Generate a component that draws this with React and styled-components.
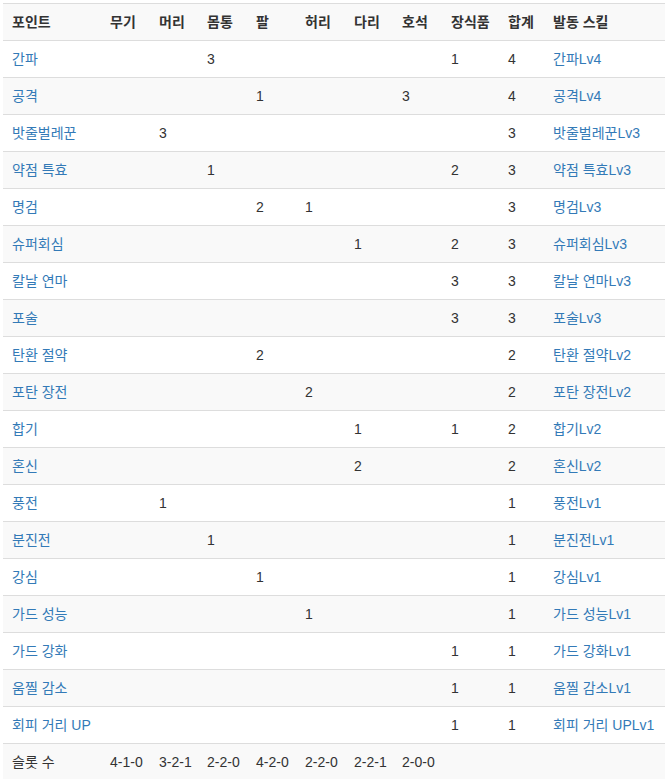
import styled, { createGlobalStyle } from 'styled-components';

const GlobalStyle = createGlobalStyle`
  body {
    margin: 0;
    font-family: "Liberation Sans", Arial, "Noto Sans CJK KR", sans-serif;
    font-size: 14px;
    line-height: 20px;
    color: #333;
    background: #fff;
  }
`

const Wrapper = styled.div`
  padding: 3px 0 0 3px;
  overflow: hidden;
`

const Table = styled.table`
  width: 662px;
  table-layout: fixed;
  border-collapse: collapse;
  border-spacing: 0;

  tr:nth-child(odd) {
    background-color: #f9f9f9;
  }
`

const Cell = styled.td`
  padding: 8px 8px 8px 9px;
  border-top: 1px solid #ddd;
  text-align: left;
  vertical-align: top;
  white-space: nowrap;
  font-weight: ${p => (p.$head ? 700 : 400)};
`

const SkillLink = styled.a`
  color: #337ab7;
  text-decoration: none;
`

const widths = [98, 49, 48, 49, 49, 49, 48, 49, 57, 45, 121];
const headers = ['포인트', '무기', '머리', '몸통', '팔', '허리', '다리', '호석', '장식품', '합계', '발동 스킬'];

// 무기, 머리, 몸통, 팔, 허리, 다리, 호석, 장식품, 합계
const skills = [
  ['간파', ['', '', 3, '', '', '', '', 1, 4], 4],
  ['공격', ['', '', '', 1, '', '', 3, '', 4], 4],
  ['밧줄벌레꾼', ['', 3, '', '', '', '', '', '', 3], 3],
  ['약점 특효', ['', '', 1, '', '', '', '', 2, 3], 3],
  ['명검', ['', '', '', 2, 1, '', '', '', 3], 3],
  ['슈퍼회심', ['', '', '', '', '', 1, '', 2, 3], 3],
  ['칼날 연마', ['', '', '', '', '', '', '', 3, 3], 3],
  ['포술', ['', '', '', '', '', '', '', 3, 3], 3],
  ['탄환 절약', ['', '', '', 2, '', '', '', '', 2], 2],
  ['포탄 장전', ['', '', '', '', 2, '', '', '', 2], 2],
  ['합기', ['', '', '', '', '', 1, '', 1, 2], 2],
  ['혼신', ['', '', '', '', '', 2, '', '', 2], 2],
  ['풍전', ['', 1, '', '', '', '', '', '', 1], 1],
  ['분진전', ['', '', 1, '', '', '', '', '', 1], 1],
  ['강심', ['', '', '', 1, '', '', '', '', 1], 1],
  ['가드 성능', ['', '', '', '', 1, '', '', '', 1], 1],
  ['가드 강화', ['', '', '', '', '', '', '', 1, 1], 1],
  ['움찔 감소', ['', '', '', '', '', '', '', 1, 1], 1],
  ['회피 거리 UP', ['', '', '', '', '', '', '', 1, 1], 1],
];

const slots = ['4-1-0', '3-2-1', '2-2-0', '4-2-0', '2-2-0', '2-2-1', '2-0-0', '', '', ''];

export default function App() {
  return (
    <Wrapper>
      <GlobalStyle />
      <Table>
        <colgroup>
          {widths.map((w, i) => <col key={i} style={{ width: w }} />)}
        </colgroup>
        <tbody>
          <tr>
            {headers.map(h => <Cell as="th" $head key={h}>{h}</Cell>)}
          </tr>
          {skills.map(([name, points, lv]) => (
            <tr key={name}>
              <Cell><SkillLink href="#">{name}</SkillLink></Cell>
              {points.map((p, i) => <Cell key={i}>{p}</Cell>)}
              <Cell><SkillLink href="#">{name}Lv{lv}</SkillLink></Cell>
            </tr>
          ))}
          <tr>
            <Cell>슬롯 수</Cell>
            {slots.map((s, i) => <Cell key={i}>{s}</Cell>)}
          </tr>
        </tbody>
      </Table>
    </Wrapper>
  )
}
